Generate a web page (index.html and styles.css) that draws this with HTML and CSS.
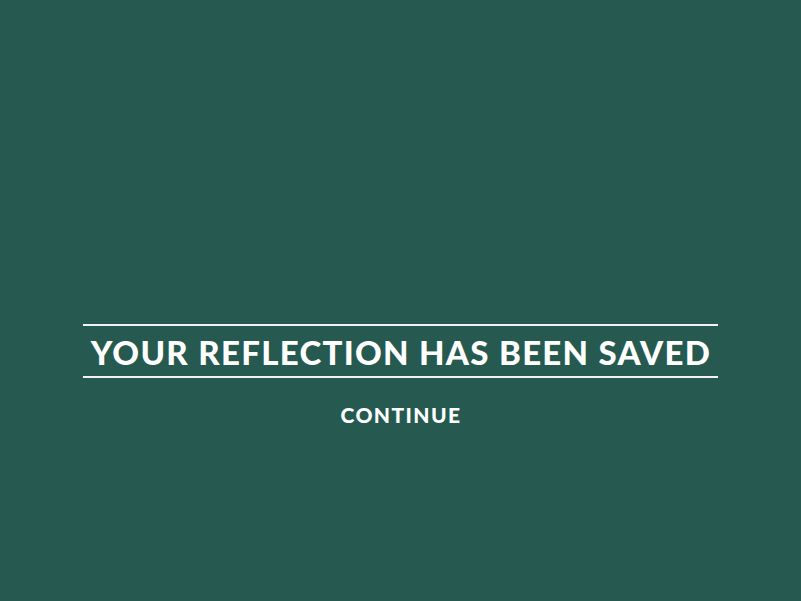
FILE: index.html
```html
<!DOCTYPE html>
<html>
<head>
<meta charset="utf-8">
<link rel="stylesheet" href="styles.css">
</head>
<body>
<main class="screen">
  <div class="banner">
    <h1 class="title">YOUR REFLECTION HAS BEEN SAVED</h1>
  </div>
  <a class="continue" href="#">CONTINUE</a>
</main>
</body>
</html>
```
FILE: styles.css
```css
html, body {
  margin: 0;
  padding: 0;
  height: 100%;
  background: #265a50;
}
.screen {
  display: flex;
  flex-direction: column;
  align-items: center;
  padding-top: 324px;
  font-family: "Lato", "DejaVu Sans", sans-serif;
  color: #ffffff;
}
.banner {
  width: 635px;
  border-top: 2px solid #f2f2f2;
  border-bottom: 2px solid #f2f2f2;
  height: 50px;
  display: flex;
  align-items: center;
  justify-content: center;
}
.title {
  margin: 0;
  font-size: 33px;
  font-weight: 900;
  letter-spacing: 1.3px;
  line-height: 1;
  padding-top: 2px;
  padding-left: 1px;
}
.continue {
  margin-top: 26px;
  font-size: 21px;
  font-weight: 900;
  letter-spacing: 1.4px;
  color: #ffffff;
  text-decoration: none;
  line-height: 1;
  padding-left: 1px;
}
```
